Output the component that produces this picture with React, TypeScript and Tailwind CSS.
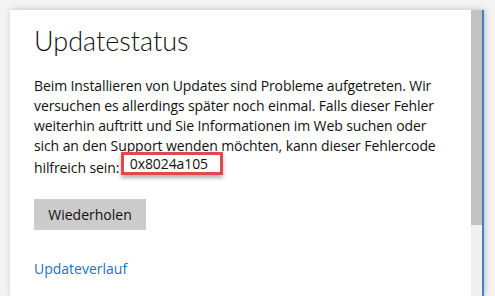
export default function App() {
  return (
    <div className="h-[296px] w-[495px] overflow-hidden bg-[#f3f3f3] pl-[10px] pt-[10px] font-['Open_Sans',sans-serif]">
      <div className="flex h-[286px] w-[474px] shadow-[1px_0_6px_rgba(0,0,0,0.22)]">
        {/* Content */}
        <div className="w-[461px] bg-white pl-[24px] pt-[15px]">
          <h1 className="font-['Lato',sans-serif] text-[27px] font-light leading-[32px] text-[#111]">
            Updatestatus
          </h1>

          <p className="mt-[19px] whitespace-nowrap text-[14px] leading-[20px] tracking-[-0.1px] text-[#111]">
            Beim Installieren von Updates sind Probleme aufgetreten. Wir
            <br />
            versuchen es allerdings später noch einmal. Falls dieser Fehler
            <br />
            weiterhin auftritt und Sie Informationen im Web suchen oder
            <br />
            sich an den Support wenden möchten, kann dieser Fehlercode
            <br />
            hilfreich sein:{" "}
            <span className="relative top-[-4px] ml-[-2px] inline-block border-[3px] border-[#e4474c] bg-white pl-[6px] pr-[12px] leading-[17px] shadow-[0_3px_4px_rgba(0,0,0,0.3)]">
              0x8024a105
            </span>
          </p>

          <button
            type="button"
            className="mt-[20px] h-[31px] w-[112px] bg-[#cccccc] text-[14px] text-[#111]"
          >
            Wiederholen
          </button>

          <div className="mt-[26px]">
            <a className="text-[14px] text-[#1c72c4]">Updateverlauf</a>
          </div>
        </div>

        {/* Scrollbar */}
        <div className="flex w-[11px] flex-col">
          <div className="h-[215px] bg-[#c2c2c2]" />
          <div className="flex-1 bg-[#f0f0f0]" />
        </div>
        <div className="w-[2px] bg-[#3f7fcc]" />
      </div>
    </div>
  );
}
